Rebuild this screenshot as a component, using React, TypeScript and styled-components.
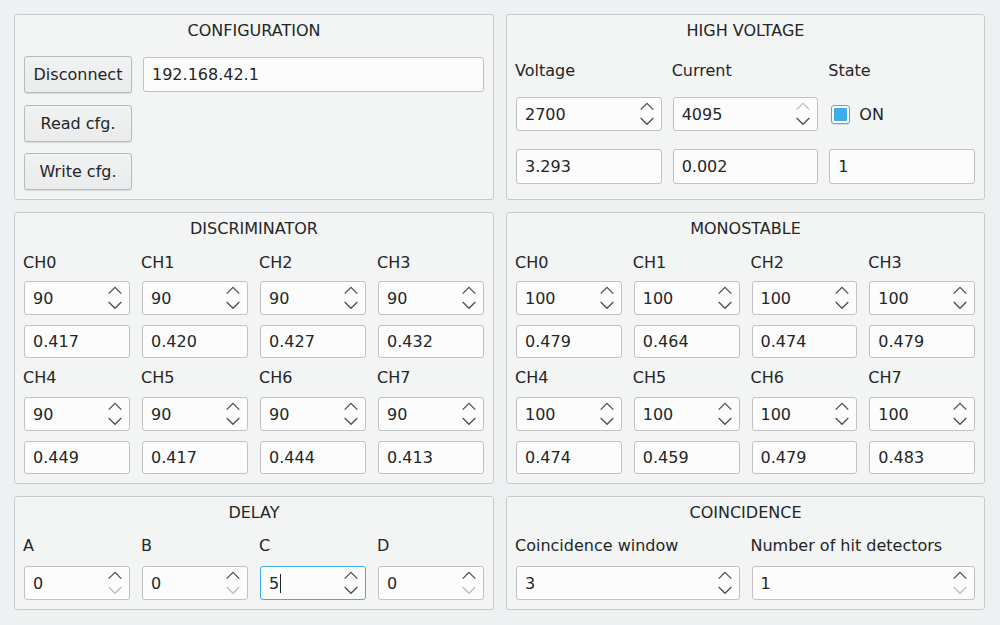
import React from "react";
import styled, { createGlobalStyle, css } from "styled-components";

const Global = createGlobalStyle`
  html, body { margin: 0; padding: 0; background: #eff0f1; }
  body {
    font-family: "DejaVu Sans", "Liberation Sans", sans-serif;
    font-size: 16px;
    color: #232627;
  }
`;

const Page = styled.div`
  width: 1000px;
  height: 625px;
  box-sizing: border-box;
  padding: 14px 15px 15px 14px;
  display: grid;
  grid-template-columns: 480px 479px;
  grid-template-rows: 186px 272px 114px;
  column-gap: 12px;
  row-gap: 12px;
`;

const Group = styled.section`
  box-sizing: border-box;
  border: 1px solid #c9cacb;
  border-radius: 3px;
  background: #f3f4f4;
  padding: 0 9px 9px 9px;
  display: flex;
  flex-direction: column;
`;

const Title = styled.div`
  height: 31px;
  line-height: 31px;
  text-align: center;
  flex: none;
`;

const Grid = styled.div<{ $cols: string; $gap: number }>`
  display: grid;
  grid-template-columns: ${(p) => p.$cols};
  column-gap: ${(p) => p.$gap}px;
`;

const Cell = styled.div`
  display: flex;
  flex-direction: column;
  min-width: 0;
`;

const Label = styled.div<{ $h: number; $pb?: number }>`
  height: ${(p) => p.$h}px;
  display: flex;
  align-items: center;
  padding-bottom: ${(p) => p.$pb ?? 0}px;
  box-sizing: border-box;
  margin-left: -1px;
  white-space: nowrap;
`;

const fieldBase = css`
  box-sizing: border-box;
  background: #fcfcfc;
  border: 1px solid #bfc1c2;
  border-radius: 3px;
  display: flex;
  align-items: center;
  padding-left: 8px;
`;

const Field = styled.div<{ $h?: number; $mt?: number }>`
  ${fieldBase};
  height: ${(p) => p.$h ?? 33}px;
  margin-top: ${(p) => p.$mt ?? 10}px;
`;

const SpinBox = styled.div<{ $focus?: boolean }>`
  ${fieldBase};
  height: 34px;
  padding-right: 7px;
  border-color: ${(p) => (p.$focus ? "#3daee9" : "#bfc1c2")};
`;

const SpinText = styled.span`
  flex: 1;
  display: flex;
  align-items: center;
`;

const Caret = styled.span`
  display: inline-block;
  width: 1px;
  height: 19px;
  background: #232627;
  margin-left: 1px;
`;

const Arrows = styled.svg`
  flex: none;
  width: 14px;
  height: 32px;
`;

const ON = "#4d4f50";
const OFF = "#bcbebf";

function Spin({
  value,
  upOff,
  downOff,
  focus,
}: {
  value: string;
  upOff?: boolean;
  downOff?: boolean;
  focus?: boolean;
}) {
  return (
    <SpinBox $focus={focus}>
      <SpinText>
        {value}
        {focus && <Caret />}
      </SpinText>
      <Arrows viewBox="0 0 14 32">
        <path
          d="M0.7 11.6 L7 5.3 L13.3 11.6"
          fill="none"
          stroke={upOff ? OFF : ON}
          strokeWidth="1.3"
        />
        <path
          d="M0.7 20 L7 26.3 L13.3 20"
          fill="none"
          stroke={downOff ? OFF : ON}
          strokeWidth="1.3"
        />
      </Arrows>
    </SpinBox>
  );
}

const ConfigBody = styled.div`
  display: grid;
  grid-template-columns: 108px 1fr;
  grid-template-rows: 37px 37px 37px;
  column-gap: 11px;
  row-gap: 11.5px;
  margin-top: 10px;
`;

const Button = styled.button`
  box-sizing: border-box;
  font: inherit;
  color: #232627;
  background: linear-gradient(#f1f2f2, #eaebec);
  border: 1px solid #b8babc;
  border-radius: 3px;
  box-shadow: 0 1px 1px rgba(0, 0, 0, 0.12);
  padding: 0;
  height: 37px;
`;

const IpInput = styled.div`
  ${fieldBase};
  height: 35px;
  margin-top: 1px;
`;

const CheckRow = styled.div`
  height: 34px;
  display: flex;
  align-items: center;
  gap: 9px;
  padding-left: 2px;
`;

const CheckBox = styled.span`
  box-sizing: border-box;
  width: 19px;
  height: 19px;
  border: 1px solid #3daee9;
  border-radius: 3px;
  background: #fcfcfc;
  display: flex;
  align-items: center;
  justify-content: center;
  box-shadow: 0 1px 1px rgba(0, 0, 0, 0.1);
  &::after {
    content: "";
    width: 13px;
    height: 13px;
    border-radius: 1px;
    background: #3daee9;
  }
`;

const disc = {
  r1: ["CH0", "CH1", "CH2", "CH3"],
  r2: ["CH4", "CH5", "CH6", "CH7"],
};

function ChannelBlock({
  labels,
  spin,
  values,
  labelH,
}: {
  labels: string[];
  spin: string;
  values: string[];
  labelH: number;
}) {
  return (
    <Grid $cols="repeat(4, 1fr)" $gap={12}>
      {labels.map((l, i) => (
        <Cell key={l}>
          <Label $h={labelH}>{l}</Label>
          <Spin value={spin} />
          <Field $h={33} $mt={10}>
            {values[i]}
          </Field>
        </Cell>
      ))}
    </Grid>
  );
}

export default function App() {
  return (
    <>
      <Global />
      <Page>
        <Group>
          <Title>CONFIGURATION</Title>
          <ConfigBody>
            <Button>Disconnect</Button>
            <IpInput>192.168.42.1</IpInput>
            <Button>Read cfg.</Button>
            <div />
            <Button>Write cfg.</Button>
          </ConfigBody>
        </Group>

        <Group>
          <Title>HIGH VOLTAGE</Title>
          <Grid $cols="repeat(3, 1fr)" $gap={11}>
            <Cell>
              <Label $h={51} $pb={2}>Voltage</Label>
              <Spin value="2700" />
              <Field $h={35} $mt={18}>
                3.293
              </Field>
            </Cell>
            <Cell>
              <Label $h={51} $pb={2}>Current</Label>
              <Spin value="4095" upOff />
              <Field $h={35} $mt={18}>
                0.002
              </Field>
            </Cell>
            <Cell>
              <Label $h={51} $pb={2}>State</Label>
              <CheckRow>
                <CheckBox />
                <span>ON</span>
              </CheckRow>
              <Field $h={35} $mt={18}>
                1
              </Field>
            </Cell>
          </Grid>
        </Group>

        <Group>
          <Title>DISCRIMINATOR</Title>
          <ChannelBlock
            labels={disc.r1}
            spin="90"
            values={["0.417", "0.420", "0.427", "0.432"]}
            labelH={37}
          />
          <ChannelBlock
            labels={disc.r2}
            spin="90"
            values={["0.449", "0.417", "0.444", "0.413"]}
            labelH={39}
          />
        </Group>

        <Group>
          <Title>MONOSTABLE</Title>
          <ChannelBlock
            labels={disc.r1}
            spin="100"
            values={["0.479", "0.464", "0.474", "0.479"]}
            labelH={37}
          />
          <ChannelBlock
            labels={disc.r2}
            spin="100"
            values={["0.474", "0.459", "0.479", "0.483"]}
            labelH={39}
          />
        </Group>

        <Group>
          <Title>DELAY</Title>
          <Grid $cols="repeat(4, 1fr)" $gap={12}>
            <Cell>
              <Label $h={38} $pb={4}>A</Label>
              <Spin value="0" downOff />
            </Cell>
            <Cell>
              <Label $h={38} $pb={4}>B</Label>
              <Spin value="0" downOff />
            </Cell>
            <Cell>
              <Label $h={38} $pb={4}>C</Label>
              <Spin value="5" focus />
            </Cell>
            <Cell>
              <Label $h={38} $pb={4}>D</Label>
              <Spin value="0" downOff />
            </Cell>
          </Grid>
        </Group>

        <Group>
          <Title>COINCIDENCE</Title>
          <Grid $cols="repeat(2, 1fr)" $gap={12}>
            <Cell>
              <Label $h={38} $pb={4}>Coincidence window</Label>
              <Spin value="3" />
            </Cell>
            <Cell>
              <Label $h={38} $pb={4}>Number of hit detectors</Label>
              <Spin value="1" downOff />
            </Cell>
          </Grid>
        </Group>
      </Page>
    </>
  );
}
